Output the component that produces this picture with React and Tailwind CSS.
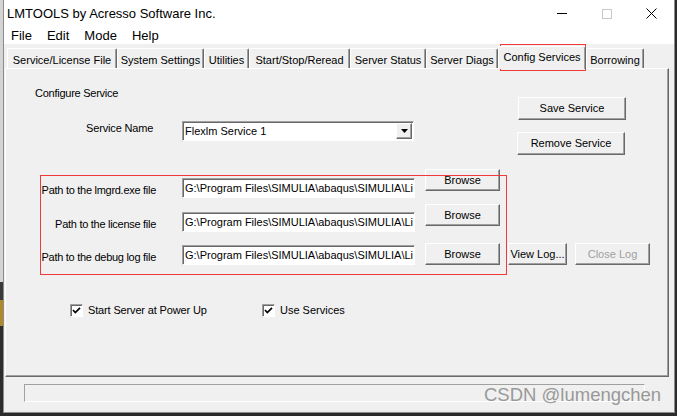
import React from "react";

const raised =
  "flex items-center justify-center bg-[#f0f0f0] border border-t-white border-l-white border-r-[#696969] border-b-[#696969] shadow-[inset_-1px_-1px_0_#a0a0a0] text-[11px] leading-[13px] text-black";
const sunken =
  "bg-white border border-t-[#a0a0a0] border-l-[#a0a0a0] border-r-white border-b-white shadow-[inset_1px_1px_0_#696969]";

function Tab({ w, children }) {
  return (
    <div
      className={`${w} h-[20px] flex items-center justify-center pt-[3px] bg-[#f0f0f0] border-t border-l border-t-white border-l-white border-r border-r-[#696969] shadow-[inset_-1px_0_0_#a0a0a0] rounded-t-[2px] text-[11px] leading-[13px] text-black whitespace-nowrap`}
    >
      {children}
    </div>
  );
}

function Check() {
  return (
    <div className={`${sunken} w-[13px] h-[13px] flex items-center justify-center`}>
      <svg width="9" height="9" viewBox="0 0 9 9">
        <polyline points="1,4 3.3,6.5 8,1.8" fill="none" stroke="#000" strokeWidth="1.7" />
      </svg>
    </div>
  );
}

const PATH = "G:\\Program Files\\SIMULIA\\abaqus\\SIMULIA\\Li";

export default function App() {
  return (
    <div className="relative w-[677px] h-[416px] overflow-hidden bg-[#2b2b2b] flex font-['Liberation_Sans',Arial,sans-serif]">
      {/* background strip */}
      <div className="w-[3px] h-full flex flex-col">
        <div className="h-[282px] bg-[#d4d4d4]" />
        <div className="h-[18px] bg-[#3a3a3a]" />
        <div className="h-[26px] bg-[#b08a2a]" />
        <div className="flex-1 bg-[#2d2d2d]" />
      </div>

      {/* window */}
      <div className="w-[672px] h-[413px] flex flex-col bg-[#f0f0f0] border-l border-r border-b border-[#8c8c8c]">
        {/* title bar */}
        <div className="h-[27px] bg-white flex items-center pl-[3px] shrink-0">
          <span className="text-[13px] leading-[15px] text-black">LMTOOLS by Acresso Software Inc.</span>
          <div className="ml-auto flex h-full">
            <div className="w-[45px] h-full flex items-center justify-center">
              <div className="w-[10px] h-[1px] bg-black" />
            </div>
            <div className="w-[45px] h-full flex items-center justify-center">
              <div className="w-[10px] h-[10px] border border-[#c8c8c8]" />
            </div>
            <div className="w-[45px] h-full flex items-center justify-center">
              <svg width="11" height="11" viewBox="0 0 11 11">
                <path d="M0.5 0.5 L10.5 10.5 M10.5 0.5 L0.5 10.5" stroke="#000" strokeWidth="1" />
              </svg>
            </div>
          </div>
        </div>

        {/* menu bar */}
        <div className="h-[17px] bg-white flex items-center gap-[15px] pl-[7px] text-[13px] leading-[17px] text-black shrink-0">
          <span>File</span>
          <span>Edit</span>
          <span>Mode</span>
          <span>Help</span>
        </div>

        {/* tabs */}
        <div className="h-[24px] flex items-end pl-[3px] shrink-0">
          <Tab w="w-[110px]">Service/License File</Tab>
          <Tab w="w-[87px]">System Settings</Tab>
          <Tab w="w-[45px]">Utilities</Tab>
          <Tab w="w-[101px]">Start/Stop/Reread</Tab>
          <Tab w="w-[76px]">Server Status</Tab>
          <Tab w="w-[72px]">Server Diags</Tab>
          <div className="relative z-10 w-[88px] h-[23px] mb-[-1px] flex items-start pt-[4px] justify-center bg-[#f0f0f0] border-t border-l border-r border-t-white border-l-white border-r-[#696969] shadow-[inset_-1px_0_0_#a0a0a0] rounded-t-[2px] text-[11px] leading-[13px] text-black whitespace-nowrap">
            Config Services
          </div>
          <Tab w="w-[58px]">Borrowing</Tab>
        </div>

        {/* panel */}
        <div className="ml-[1px] w-[664px] h-[309px] shrink-0 flex flex-col border border-t-white border-l-white border-r-[#696969] border-b-[#696969] shadow-[inset_-1px_-1px_0_#a0a0a0] text-[11px] leading-[13px] text-black">
          {/* block 1 */}
          <div className="flex">
            <div className="flex flex-col">
              <div className="ml-[29px] mt-[18px] tracking-[-0.25px]">Configure Service</div>
              <div className="mt-[21px] flex items-start">
                <div className="ml-[80px] w-[96px] mt-[1px] tracking-[-0.15px]">Service Name</div>
                <div className={`${sunken} w-[232px] h-[20px] flex items-center`}>
                  <span className="pl-[2px] flex-1 whitespace-nowrap">Flexlm Service 1</span>
                  <div className="w-[16px] h-[16px] mr-[1px] flex items-center justify-center bg-[#f0f0f0] border border-t-white border-l-white border-r-[#696969] border-b-[#696969] shadow-[inset_-1px_-1px_0_#a0a0a0]">
                    <svg width="7" height="4" viewBox="0 0 7 4">
                      <path d="M0 0 H7 L3.5 4 Z" fill="#000" />
                    </svg>
                  </div>
                </div>
              </div>
            </div>
            <div className="ml-auto mr-[42px] mt-[28px] flex flex-col">
              <div className={`${raised} w-[108px] h-[23px]`}>Save Service</div>
              <div className={`${raised} w-[108px] h-[23px] mt-[12px] -ml-[1px]`}>Remove Service</div>
            </div>
          </div>

          {/* path row 1 */}
          <div className="mt-[14px] flex items-start">
            <div className="w-[150px] text-right mt-[15px] whitespace-nowrap tracking-[-0.28px]">Path to the lmgrd.exe file</div>
            <div className={`${sunken} ml-[26px] mt-[9px] w-[233px] h-[20px] flex items-center overflow-hidden`}>
              <span className="pl-[2px] whitespace-nowrap">{PATH}</span>
            </div>
            <div className={`${raised} ml-[10px] w-[75px] h-[22px]`}>Browse</div>
          </div>

          {/* path row 2 */}
          <div className="mt-[6px] flex items-start">
            <div className="w-[150px] text-right mt-[14px] whitespace-nowrap tracking-[-0.28px]">Path to the license file</div>
            <div className={`${sunken} ml-[26px] mt-[8px] w-[233px] h-[20px] flex items-center overflow-hidden`}>
              <span className="pl-[2px] whitespace-nowrap">{PATH}</span>
            </div>
            <div className={`${raised} ml-[10px] w-[75px] h-[22px]`}>Browse</div>
          </div>

          {/* path row 3 */}
          <div className="mt-[11px] flex items-start">
            <div className="w-[150px] text-right mt-[8px] whitespace-nowrap tracking-[-0.28px]">Path to the debug log file</div>
            <div className={`${sunken} ml-[26px] mt-[2px] w-[233px] h-[20px] flex items-center overflow-hidden`}>
              <span className="pl-[2px] whitespace-nowrap">{PATH}</span>
            </div>
            <div className={`${raised} ml-[10px] w-[75px] h-[22px]`}>Browse</div>
            <div className={`${raised} ml-[8px] w-[59px] h-[22px]`}>View Log...</div>
            <div className={`${raised} ml-[8px] w-[75px] h-[22px] !text-[#a0a0a0]`}>Close Log</div>
          </div>

          {/* checkboxes */}
          <div className="mt-[39px] ml-[64px] flex items-center">
            <div className="w-[192px] flex items-center">
              <Check />
              <span className="ml-[5px] whitespace-nowrap tracking-[-0.15px]">Start Server at Power Up</span>
            </div>
            <div className="flex items-center">
              <Check />
              <span className="ml-[5px] whitespace-nowrap">Use Services</span>
            </div>
          </div>
        </div>

        {/* status bar */}
        <div className="mt-[7px] ml-[20px] w-[621px] h-[18px] shrink-0 bg-[#f0f0f0] border border-t-[#a0a0a0] border-l-[#a0a0a0] border-r-white border-b-white" />
      </div>

      {/* annotation overlays */}
      <div className="absolute left-[500px] top-[44px] w-[86px] h-[27px] border border-[#f03a3a] pointer-events-none" />
      <div className="absolute left-[40px] top-[175px] w-[467px] h-[100px] border border-[#f03a3a] pointer-events-none" />

      {/* watermark */}
      <div className="absolute left-[484px] top-[385px] text-[18.5px] leading-[20px] text-[#999999] whitespace-nowrap">
        CSDN @lumengchen
      </div>
    </div>
  );
}
